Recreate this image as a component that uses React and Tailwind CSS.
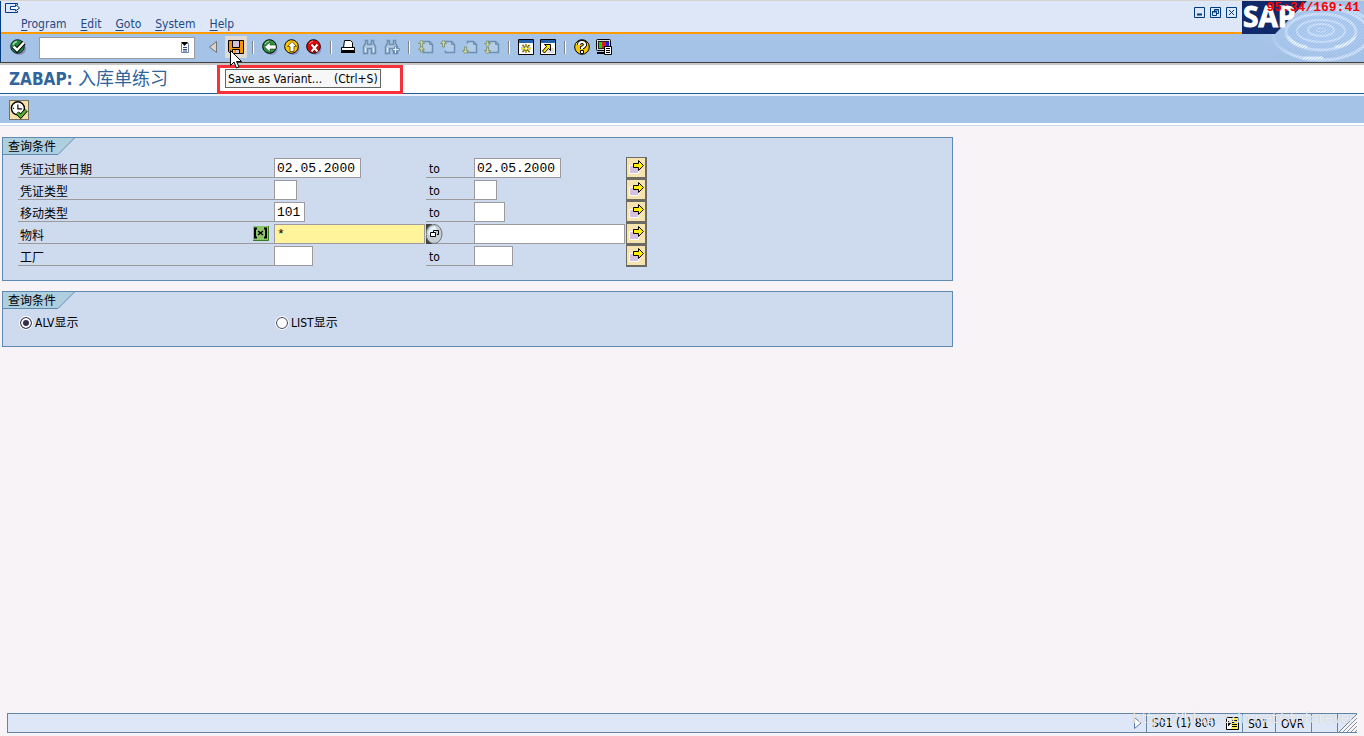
import React, { useState } from "react";

const menus = ["Program", "Edit", "Goto", "System", "Help"];

const criteria = [
  { id: "date", label: "凭证过账日期", width: "w-[87px]", low: "02.05.2000", high: "02.05.2000" },
  { id: "docType", label: "凭证类型", width: "w-[23px]", low: "", high: "" },
  { id: "moveType", label: "移动类型", width: "w-[31px]", low: "101", high: "" },
  { id: "material", label: "物料", width: "w-[151px]", low: "*", high: "", active: true },
  { id: "plant", label: "工厂", width: "w-[39px]", low: "", high: "" },
];

const Icon = ({ children, size = 16 }) => (
  <svg width={size} height={size} viewBox="0 0 16 16" fill="none" aria-hidden="true">
    {children}
  </svg>
);

const CheckIcon = () => (
  <Icon>
    <ellipse cx="9.5" cy="10" rx="6.5" ry="6" fill="#8c8cc0" />
    <circle cx="7.5" cy="7.5" r="6.8" fill="#1f8a3c" stroke="#123" />
    <path d="M3 6q1-3 4-3.500" stroke="#9fd6a0" strokeWidth="1.500" />
    <path d="M3.500 7.500L7 11l7-7.500" stroke="#000" strokeWidth="4.500" />
    <path d="M3.500 7.500L7 11l7-7.500" stroke="#fff" strokeWidth="2.500" />
  </Icon>
);

const SaveIcon = () => (
  <Icon>
    <path d="M.5 1.500h15v13H2.500l-2-2z" fill="#f79400" stroke="#000" />
    <path d="M4.500 1.500h7v7h-7z" fill="#d6c0e0" stroke="#000" />
    <path d="M4.500 10.500h7v4h-7z" fill="#d6c0e0" stroke="#000" />
    <path d="M6 11h2v3H6z" fill="#f79400" />
  </Icon>
);

const RoundIcon = ({ color, children }) => (
  <Icon>
    <ellipse cx="9.500" cy="10" rx="6" ry="6" fill="#8c94c8" />
    <circle cx="7.500" cy="7.500" r="6.800" fill={color} stroke="#000" />
    {children}
  </Icon>
);

const BackIcon = () => (
  <RoundIcon color="#2d9440">
    <path d="M3 5q1.500-2.500 4-3" stroke="#a5dba5" />
    <path d="M2.500 8L8 3v3h6v4H8v3z" fill="#fff" stroke="#1c3c1c" strokeWidth=".6" />
  </RoundIcon>
);

const ExitIcon = () => (
  <RoundIcon color="#fcc600">
    <path d="M8 2.500l4.500 5H10v5H6v-5H3.500z" fill="#fff" stroke="#5a4200" strokeWidth=".8" />
  </RoundIcon>
);

const CancelIcon = () => (
  <RoundIcon color="#e00808">
    <path d="M3 5q1.500-2.500 4-3" stroke="#ff9c9c" />
    <path d="M5.500 5.500l6 7M11.500 5.500l-6 7" stroke="#700" strokeWidth="3.500" />
    <path d="M5.500 5.500l6 7M11.500 5.500l-6 7" stroke="#fff" strokeWidth="2" />
  </RoundIcon>
);

const PrintIcon = () => (
  <Icon>
    <path d="M3.500 8.500l1-7h6l2 2v5" fill="#fff" stroke="#000" />
    <path d="M1.500 8.500h13v3h-13z" fill="#fff" stroke="#000" />
    <path d="M1 13h14" stroke="#000" strokeWidth="2" />
  </Icon>
);

const FindIcon = ({ next }) => (
  <Icon>
    <path
      d="M3.500 1.500h2v4h4v-4h2v3l2 3v7h-4v-5h-4v5h-4v-7l2-3z"
      fill="#b5cbe4"
      stroke="#6b8fae"
      strokeWidth="1.500"
    />
    <path d="M3.500 9v4M11.500 9v4" stroke="#e3edf8" />
    {next && (
      <path d="M10.500 7.500h2v2h3v2h-3v3h-2v-3h-2v-2h2z" fill="#e0ecf7" stroke="#6b8fae" />
    )}
  </Icon>
);

// Page navigation: a sheet with one or two khaki arrows beside it
const PageIcon = ({ kind }) => (
  <Icon>
    <path d="M5.500 4.500v-2h6l3 3v8h-9v-2" fill="#b3cce8" stroke="#6b8fae" strokeWidth="1.500" />
    <path d="M11.500 2.500v3h3" stroke="#6b8fae" />
    {(kind === "first" || kind === "prev") && (
      <path d="M3.500 1l3 3.500h-2V8h-2V4.500h-2z" fill="#d5d093" stroke="#76906e" strokeWidth=".8" />
    )}
    {kind === "first" && (
      <path d="M3.500 7l3 3.500h-2V13h-2v-2.500h-2z" fill="#d5d093" stroke="#76906e" strokeWidth=".8" />
    )}
    {kind === "last" && (
      <path d="M3.500 7.500l3-3h-2V2h-2v2.500h-2z" fill="#d5d093" stroke="#76906e" strokeWidth=".8" />
    )}
    {(kind === "next" || kind === "last") && (
      <path d="M3.500 15l3-3.500h-2V8h-2v3.500h-2z" fill="#d5d093" stroke="#76906e" strokeWidth=".8" />
    )}
  </Icon>
);

const SessionIcon = () => (
  <Icon>
    <path d="M.5.5h15v15H.5z" fill="#fff" stroke="#000" />
    <path d="M1 1h14v3H1z" fill="#2463ae" />
    <path d="M8 5v9M3 9.500h10M4.500 6l7 7M11.500 6l-7 7" stroke="#222" strokeWidth="1.400" />
    <path d="M8 5v9M3 9.500h10M5 6.500l6 6M11 6.500l-6 6" stroke="#ffe600" />
    <path d="M7 8.500h2v2H7z" fill="#fff" />
  </Icon>
);

const ShortcutIcon = () => (
  <Icon>
    <path d="M.5.5h15v15H.5z" fill="#fff" stroke="#000" />
    <path d="M1 1h14v3H1z" fill="#2463ae" />
    <path d="M10 9h4v5H7z" fill="#ddd" />
    <path d="M4.500 5.500h6v6l-2-2-4 4.500-2-2 4-4.500z" fill="#ffe600" stroke="#000" />
  </Icon>
);

const HelpIcon = () => (
  <Icon>
    <circle cx="8" cy="8" r="7.300" fill="#f7c600" stroke="#000" />
    <path d="M2.500 5a6 6 0 014-3" stroke="#fff" />
    <path d="M5 6q0-3 3-3t3 2.800q0 1.500-3 3V10" stroke="#000" strokeWidth="4" />
    <path d="M5 6q0-3 3-3t3 2.800q0 1.500-3 3V10" stroke="#fff" strokeWidth="2.200" />
    <path d="M6.500 11.500h3v3h-3z" fill="#fff" stroke="#000" />
  </Icon>
);

const LayoutIcon = () => (
  <Icon>
    <path d="M.5 1.500q0-1 1-1h12q1 0 1 1v9q0 1-1 1h-12q-1 0-1-1z" fill="#ddd" stroke="#000" />
    <path d="M2 2h11v8H2z" fill="#222" />
    <path d="M3 3h3v6H3z" fill="#18d818" />
    <path d="M6 3h4v6H6z" fill="#e01818" />
    <path d="M10 3h3v6h-3z" fill="#2020d8" />
    <path d="M1 14h8" stroke="#000" strokeWidth="2" />
    <path d="M8.500 7.500h7v8h-7z" fill="#fff" stroke="#000" />
    <path d="M10 9.500h4M10 11.500h4M10 13.500h4" stroke="#000" />
  </Icon>
);

const ExecuteIcon = () => (
  <Icon size={18}>
    <circle cx="7" cy="6.500" r="5.800" fill="#fff" stroke="#000" strokeWidth="1.200" />
    <path d="M7 3v4h3.500" stroke="#000" />
    <path d="M2.500 6.500h1M7 10v1" stroke="#000" />
    <path d="M6.500 10.500l3 3L14.500 8" stroke="#000" strokeWidth="3.600" />
    <path d="M6.500 10.500l3 3L14.500 8" stroke="#59b030" strokeWidth="2.200" />
  </Icon>
);

const MultiIcon = () => (
  <svg width="18" height="18" viewBox="0 0 18 18" fill="none" aria-hidden="true">
    <path d="M2.500 7.500h9v8h-9z" fill="#d6c0e0" stroke="#fff" />
    <path d="M6.500 5.500h5v-3l5 5-5 5v-3h-5z" fill="#ffec00" stroke="#000" />
  </svg>
);

const ToolButton = ({ label, children }) => (
  <button type="button" aria-label={label} className="flex h-[22px] w-[22px] items-center justify-center">
    {children}
  </button>
);

const Separator = () => (
  <div className="flex w-3 justify-center">
    <span className="h-[13px] w-[2px] border-l border-[#848484] bg-white" />
  </div>
);

const WindowButton = ({ label, children }) => (
  <button type="button" aria-label={label} className="h-[11px] w-[11px] text-[#003c7b]">
    <svg width="11" height="11" viewBox="0 0 11 11" fill="none" stroke="currentColor">
      <path d="M.5.5h10v10H.5z" />
      {children}
    </svg>
  </button>
);

const Brand = () => (
  <svg width="122" height="61" viewBox="0 0 122 61" className="shrink-0" role="img" aria-label="SAP">
    <defs>
      <pattern id="grain" width="3" height="3" patternUnits="userSpaceOnUse">
        <path d="M0 0h1v1H0zM2 1h1v1H2zM1 2h1v1H1z" fill="#8fb3e2" opacity=".45" />
      </pattern>
      <radialGradient id="pool" cx="68%" cy="50%" r="58%">
        <stop offset="0" stopColor="#b4d0f4" />
        <stop offset="1" stopColor="#a5c2e7" />
      </radialGradient>
      <linearGradient id="fade" x1="0" x2="1" y1="0" y2="0">
        <stop offset="0" stopColor="#fff" stopOpacity="0" />
        <stop offset=".25" stopColor="#fff" />
      </linearGradient>
      <mask id="shore">
        <path d="M26 0h96v61H26z" fill="url(#fade)" />
      </mask>
    </defs>
    <path d="M0 0h122v61H0z" fill="url(#pool)" />
    <g mask="url(#shore)">
      <g fill="none" stroke="#cfe1fb">
        <ellipse cx="79" cy="29" rx="5" ry="2" strokeWidth="1" />
        <ellipse cx="79" cy="29" rx="13" ry="6" strokeWidth="2" />
        <ellipse cx="79" cy="30" rx="24" ry="11" strokeWidth="2" />
        <ellipse cx="79" cy="31" rx="35" ry="18" strokeWidth="3" />
        <ellipse cx="79" cy="33" rx="48" ry="26" strokeWidth="3" />
        <path d="M84 3q24 3 38 13" strokeWidth="3" />
        <path d="M46 36q6 8 18 10M94 46q12-2 18-9M62 57h18" stroke="#e8f2ff" strokeWidth="3" strokeLinecap="round" />
      </g>
      <path d="M26 0h96v61H26z" fill="url(#grain)" />
    </g>
    <path d="M0 0h65L33 33H0z" fill="#10296b" />
    <text
      x="1"
      y="26"
      fill="#fff"
      stroke="#fff"
      fontFamily="'Liberation Sans Narrow', 'Open Sans', sans-serif"
      fontSize="28"
      fontWeight="700"
    >
      SAP
    </text>
  </svg>
);

const GroupBox = ({ title, className, children }) => (
  <section
    aria-label={title}
    className={`mx-[2px] w-full max-w-[951px] border border-[#5f8ab1] bg-[#cedbef] ${className}`}
  >
    <div className="relative h-[17px] w-[72px]">
      <svg width="72" height="17" viewBox="0 0 72 17" className="absolute inset-0" aria-hidden="true">
        <path d="M0 0h71L55 16H0z" fill="#adcfde" />
        <path d="M0 16.500h55L71.500 0" fill="none" stroke="#5f8ab1" />
      </svg>
      <h2 className="relative pl-[5px] leading-[18px]">{title}</h2>
    </div>
    {children}
  </section>
);

const fieldClass =
  "h-5 shrink-0 border border-[#9c9a9c] px-[2px] font-['Liberation_Mono','Noto_Sans_CJK_SC',monospace] text-[13px] leading-[18px] outline-none";

const CriteriaRow = ({ row }) => {
  const [low, setLow] = useState(row.low);
  const [high, setHigh] = useState(row.high);

  return (
    <div className="flex h-[22px] items-center">
      <label
        htmlFor={`${row.id}-low`}
        className="flex h-5 w-64 items-center justify-between border-b border-[#9c9a9c] pl-[2px] pt-[5px]"
      >
        {row.label}
        {row.active && (
          <svg width="16" height="15" viewBox="0 0 16 15" fill="none" className="mb-[5px] mr-[5px]" aria-hidden="true">
            <path d="M0 0h16v15H0z" fill="#8cc66b" />
            <path d="M0 14.500h15.500V0" stroke="#397b21" />
            <path d="M4 2.500H2v9h2M11 2.500h2v9h-2" stroke="#000" strokeWidth="2" />
            <path d="M5 5l5 4M10 5L5 9" stroke="#000" strokeWidth="1.500" />
          </svg>
        )}
      </label>
      <div className="flex w-[152px]">
        <input
          id={`${row.id}-low`}
          value={low}
          onChange={(e) => setLow(e.target.value)}
          className={`${fieldClass} ${row.width} ${row.active ? "bg-[#fff39c]" : "bg-white"}`}
        />
      </div>
      <div className="flex h-5 w-12 items-center border-b border-[#9c9a9c]">
        {row.active ? (
          <button type="button" aria-label="Search help" className="h-5 w-[17px]">
            <svg width="17" height="20" viewBox="0 0 17 20" fill="none">
              <path d="M0 0h6v20H0z" fill="#424242" />
              <ellipse cx="8" cy="10" rx="8" ry="9.500" fill="#c6cdd3" stroke="#6b7378" />
              <path d="M2 9q2-7 7-7l2 4-6 7z" fill="#e7f3fc" />
              <path d="M7.500 9V6.500h5v4H11" stroke="#000" />
              <path d="M4.500 8.500h5v4h-5z" fill="#fff" stroke="#000" />
            </svg>
          </button>
        ) : (
          <label htmlFor={`${row.id}-high`} className="pl-[3px] pt-[3px]">
            to
          </label>
        )}
      </div>
      <div className="flex w-[152px]">
        <input
          id={`${row.id}-high`}
          aria-label={`${row.label} to`}
          value={high}
          onChange={(e) => setHigh(e.target.value)}
          className={`${fieldClass} ${row.width} bg-white`}
        />
      </div>
      <button
        type="button"
        aria-label="Multiple selection"
        className="flex h-[22px] w-[21px] items-start justify-start border border-b-2 border-r-2 border-[#6b6b63] bg-[#f7e3ad]"
      >
        <MultiIcon />
      </button>
    </div>
  );
};

const DisplayOption = ({ value, selected, onSelect, children }) => (
  <label className="flex w-64 items-center gap-[3px]">
    <input
      type="radio"
      name="display"
      value={value}
      checked={selected === value}
      onChange={() => onSelect(value)}
      className="h-3 w-3 appearance-none rounded-full border border-[#31304a] bg-white outline outline-white checked:bg-[#31304a] checked:shadow-[inset_0_0_0_2px_#fff]"
    />
    {children}
  </label>
);

const App = () => {
  const [display, setDisplay] = useState("alv");
  const [command, setCommand] = useState("");

  return (
    <div className="relative flex min-h-screen flex-col overflow-hidden bg-[#f7f3f7] font-['DejaVu_Sans_Condensed','Noto_Sans_CJK_SC',sans-serif] text-[12px] leading-4 text-black">
      {/* Menu and system toolbar */}
      <header className="flex border-t border-[#d6d3ce]">
        <div className="flex-1 border-l border-[#003c7b]">
          <div className="flex h-[33px] justify-between border-b-2 border-[#ff9a00] bg-[#dee7f7]">
            <div className="pl-1">
              <svg width="16" height="12" viewBox="0 0 16 12" fill="none" className="mt-[1px]" aria-hidden="true">
                <path d="M12.500 3V1.500H.5v9h12V9" stroke="#003c84" />
                <path d="M5.500 4.500h5v-2l4 3.500-4 3V7.500h-5z" fill="#fff" stroke="#003c84" />
              </svg>
              <nav className="flex gap-[14px] pl-4 pt-[2px]">
                {menus.map((name) => (
                  <button key={name} type="button" className="text-[#1f4a84]">
                    <span className="underline underline-offset-2">{name[0]}</span>
                    {name.slice(1)}
                  </button>
                ))}
              </nav>
            </div>
            <div className="flex gap-[5px] pr-[5px] pt-[6px]">
              <WindowButton label="Minimize">
                <path d="M3 7.500h5" strokeWidth="2" />
              </WindowButton>
              <WindowButton label="Restore">
                <path d="M4.500 4V2.500h4v4H7M2.500 4.500h4v4h-4z" />
                <path d="M2 5h5M4 3h5" />
              </WindowButton>
              <WindowButton label="Close">
                <path d="M3 3l5 5M8 3L3 8" />
              </WindowButton>
            </div>
          </div>

          <div className="flex h-7 items-center bg-[#a5c2e7] pb-[2px] pl-[6px]">
            <ToolButton label="Enter">
              <CheckIcon />
            </ToolButton>
            <div className="mb-[1px] ml-[10px] mr-[7px] flex h-[22px] w-[156px] items-center self-end border border-[#9c9a9c] bg-white pr-1">
              <input
                aria-label="Command"
                value={command}
                onChange={(e) => setCommand(e.target.value)}
                className="w-full min-w-0 flex-1 outline-none"
              />
              <svg width="10" height="12" viewBox="0 0 10 12" fill="none" aria-hidden="true">
                <path d="M1.500 1.500h7v9h-7z" fill="#fff" stroke="#6b84a5" />
                <path d="M1 0h7L4.500 4z" fill="#000" />
                <path d="M3 5.500h4M3 7.500h4M3 9h4" stroke="#29528c" />
              </svg>
            </div>
            <ToolButton label="Collapse">
              <svg width="8" height="12" viewBox="0 0 8 12" aria-hidden="true">
                <path d="M7.500.5v11L.5 6z" fill="#d6d3ce" stroke="#737373" />
              </svg>
            </ToolButton>
            <div className="ml-[1px] bg-[#dedbd6]">
              <ToolButton label="Save as Variant">
                <SaveIcon />
              </ToolButton>
            </div>
            <Separator />
            <ToolButton label="Back"><BackIcon /></ToolButton>
            <ToolButton label="Exit"><ExitIcon /></ToolButton>
            <ToolButton label="Cancel"><CancelIcon /></ToolButton>
            <Separator />
            <ToolButton label="Print"><PrintIcon /></ToolButton>
            <ToolButton label="Find"><FindIcon /></ToolButton>
            <ToolButton label="Find next"><FindIcon next /></ToolButton>
            <Separator />
            <ToolButton label="First page"><PageIcon kind="first" /></ToolButton>
            <ToolButton label="Previous page"><PageIcon kind="prev" /></ToolButton>
            <ToolButton label="Next page"><PageIcon kind="next" /></ToolButton>
            <ToolButton label="Last page"><PageIcon kind="last" /></ToolButton>
            <Separator />
            <ToolButton label="New session"><SessionIcon /></ToolButton>
            <ToolButton label="Create shortcut"><ShortcutIcon /></ToolButton>
            <Separator />
            <ToolButton label="Help"><HelpIcon /></ToolButton>
            <ToolButton label="Customize layout"><LayoutIcon /></ToolButton>
          </div>
        </div>
        <Brand />
      </header>

      {/* Title */}
      <div className="border-t border-[#424142]">
        <div className="flex h-[31px] items-center border-b border-t-2 border-b-[#215a8c] border-t-[#c6c7c6] bg-white pl-[9px] text-[#31659c]">
          <h1 className="text-[17px] font-bold leading-6">
            ZABAP: <span className="text-[18px] font-normal">入库单练习</span>
          </h1>
        </div>
      </div>

      {/* Application toolbar */}
      <div className="border-b border-t-2 border-b-[#ced7ef] border-t-[#eff3ff] bg-white pb-[2px]">
        <div className="flex h-[27px] items-start bg-[#a5c2e7] pl-[9px] pt-1">
          <button
            type="button"
            aria-label="Execute"
            className="flex h-5 w-5 items-center justify-center border border-[#737163] bg-[#f7dfa5]"
          >
            <ExecuteIcon />
          </button>
        </div>
      </div>

      <main className="flex-1 pt-[11px]">
        <GroupBox title="查询条件" className="pb-[13px]">
          <div className="pl-[15px] pt-[2px]">
            {criteria.map((row) => (
              <CriteriaRow key={row.id} row={row} />
            ))}
          </div>
        </GroupBox>
        <GroupBox title="查询条件" className="mt-[10px] pb-[15px]">
          <div className="flex pl-[17px] pt-[6px]">
            <DisplayOption value="alv" selected={display} onSelect={setDisplay}>
              ALV显示
            </DisplayOption>
            <DisplayOption value="list" selected={display} onSelect={setDisplay}>
              LIST显示
            </DisplayOption>
          </div>
        </GroupBox>
      </main>

      {/* Status bar */}
      <footer className="mb-[3px] ml-[7px] mr-[7px] flex h-5 items-stretch border border-r-0 border-[#6384a5] bg-[#dee7f7] leading-5">
        <div className="flex flex-1 items-center justify-end pr-1">
          <svg width="8" height="12" viewBox="0 0 8 12" aria-hidden="true">
            <path d="M.5.5v11L7 6z" fill="#fff" stroke="#5a7ba5" />
          </svg>
        </div>
        <div className="flex w-24 items-center justify-between border-l border-[#6384a5] pl-[5px] pr-[3px]">
          <span>S01 (1) 800</span>
          <svg width="13" height="13" viewBox="0 0 13 13" fill="none" aria-hidden="true">
            <path d="M.5.5h12v12H.5z" fill="#fff" stroke="#000" />
            <path d="M5 1h7v11H5z" fill="#ffef4a" />
            <path d="M6 3.500h5M6 5.500h5M6 7.500h5M6 9.500h5" stroke="#000" />
            <path d="M2 3.500v6l3-3z" fill="#000" />
          </svg>
        </div>
        <div className="w-[33px] border-l border-[#6384a5] pl-[5px]">S01</div>
        <div className="w-9 border-l border-[#6384a5] pl-[5px]">OVR</div>
        <div className="w-[26px] border-l border-[#6384a5]" />
        <div className="flex w-5 border-l border-[#6384a5]">
          <svg width="19" height="18" viewBox="0 0 19 18" fill="none" aria-hidden="true">
            <path d="M19 0v18H1z" fill="#f7f3f7" />
            <path d="M1 18L19 0" stroke="#6384a5" />
            <path d="M5 18L19 4M9 18L19 8M13 18l6-6M17 18l2-2" stroke="#8492a8" />
          </svg>
        </div>
      </footer>

      {/* Floating layers */}
      <div className="pointer-events-none absolute left-[217px] top-[65px] h-[29px] w-[186px] border-[3px] border-[#f73139]" />
      <div
        role="tooltip"
        className="absolute left-[225px] top-[69px] flex h-[19px] items-center gap-3 whitespace-nowrap border border-[#636563] bg-[#f7f7f7] px-[2px]"
      >
        <span>Save as Variant...</span>
        <span>(Ctrl+S)</span>
      </div>
      <svg
        width="13"
        height="20"
        viewBox="0 0 13 20"
        className="pointer-events-none absolute left-[230px] top-[50px]"
        aria-hidden="true"
      >
        <path d="M.5.5v15l3.500-3.500 2.500 6 2.500-1-2.500-5.500h5z" fill="#fff" stroke="#000" />
      </svg>
      <div className="absolute right-1 top-0 font-['Liberation_Mono',monospace] text-[13px] font-bold text-[#ff0000]">
        95:34/169:41
      </div>
      <div className="pointer-events-none absolute bottom-[9px] right-[9px] font-['Open_Sans',sans-serif] text-[15px] leading-5 text-white/80 [text-shadow:0_0_1px_#84828499]">
        https://blog.csdn.net/stuforever
      </div>
    </div>
  );
};

export default App;
